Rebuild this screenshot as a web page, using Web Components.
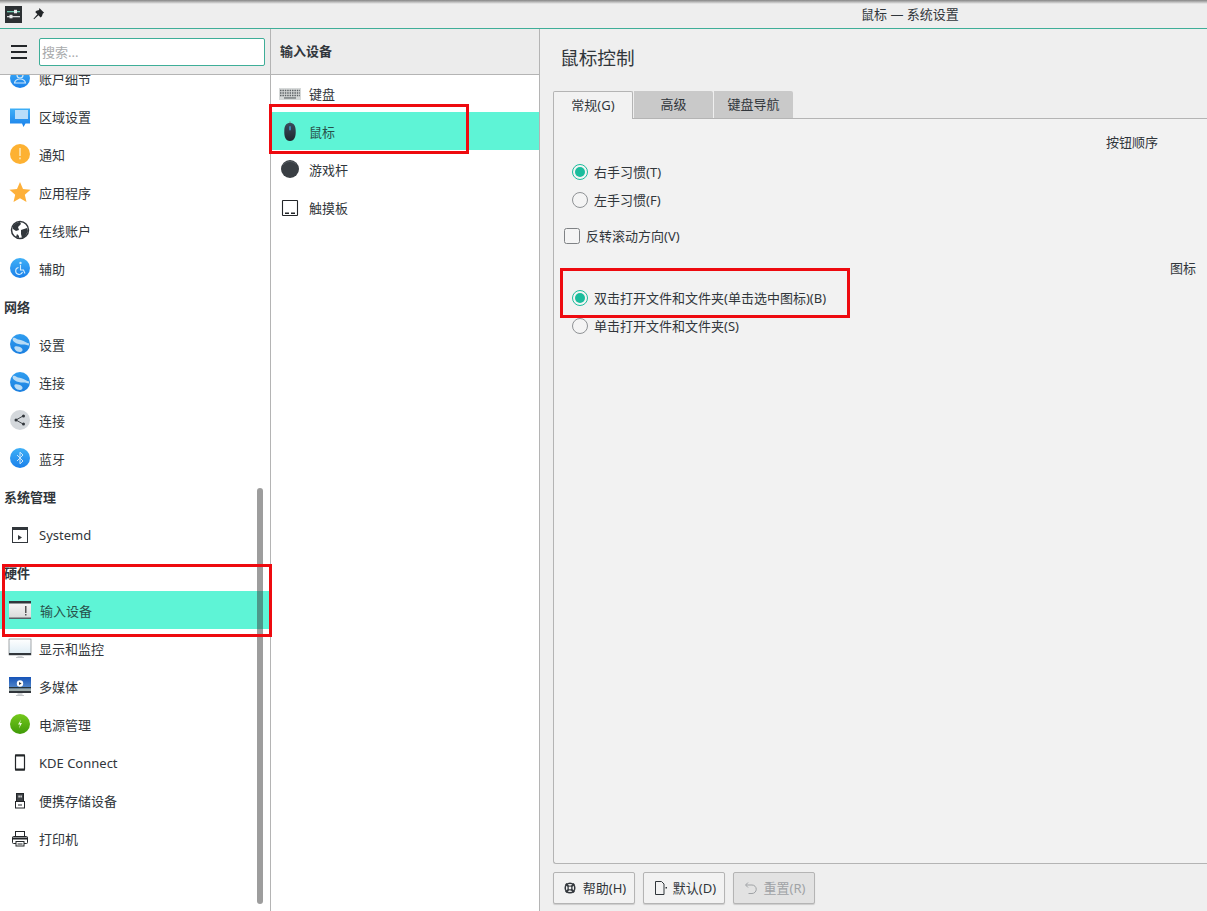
<!DOCTYPE html>
<html lang="zh"><head><meta charset="utf-8"><title>鼠标 — 系统设置</title>
<style>
html,body{margin:0;height:100%;overflow:hidden;background:#efefef}
body{font:13px/18px "Noto Sans","Noto Sans CJK SC",sans-serif;color:#31363b}
</style></head><body>
<kde-window>
  <kde-titlebar slot="top">鼠标 — 系统设置</kde-titlebar>
  <kde-sidebar slot="side">
    <kde-row icon="user">账户细节</kde-row>
    <kde-row icon="region">区域设置</kde-row>
    <kde-row icon="notify">通知</kde-row>
    <kde-row icon="star">应用程序</kde-row>
    <kde-row icon="world">在线账户</kde-row>
    <kde-row icon="access">辅助</kde-row>
    <kde-section>网络</kde-section>
    <kde-row icon="globe">设置</kde-row>
    <kde-row icon="globe">连接</kde-row>
    <kde-row icon="share">连接</kde-row>
    <kde-row icon="bt">蓝牙</kde-row>
    <kde-section>系统管理</kde-section>
    <kde-row icon="systemd">Systemd</kde-row>
    <kde-section>硬件</kde-section>
    <kde-row icon="input" selected style="--gap:8px">输入设备</kde-row>
    <kde-row icon="monitor">显示和监控</kde-row>
    <kde-row icon="media">多媒体</kde-row>
    <kde-row icon="power">电源管理</kde-row>
    <kde-row icon="phone">KDE Connect</kde-row>
    <kde-row icon="usb">便携存储设备</kde-row>
    <kde-row icon="printer">打印机</kde-row>
  </kde-sidebar>
  <kde-subnav slot="mid" heading="输入设备" style="--pad:7px">
    <kde-row icon="keyboard">键盘</kde-row>
    <kde-row icon="mouse" selected>鼠标</kde-row>
    <kde-row icon="joystick">游戏杆</kde-row>
    <kde-row icon="touchpad">触摸板</kde-row>
  </kde-subnav>
  <kde-panel slot="main" heading="鼠标控制">
    <kde-tabs>
      <kde-group heading="按钮顺序" pad="49" style="--top:14px">
        <kde-option type="radio" checked>右手习惯(T)</kde-option>
        <kde-option type="radio">左手习惯(F)</kde-option>
      </kde-group>
      <kde-option type="check" style="--indent:10px">反转滚动方向(V)</kde-option>
      <kde-group heading="图标" pad="11" style="--top:1px">
        <kde-option type="radio" checked>双击打开文件和文件夹(单击选中图标)(B)</kde-option>
        <kde-option type="radio">单击打开文件和文件夹(S)</kde-option>
      </kde-group>
    </kde-tabs>
    <kde-button slot="buttons" icon="help">帮助(H)</kde-button>
    <kde-button slot="buttons" icon="doc">默认(D)</kde-button>
    <kde-button slot="buttons" icon="undo" disabled>重置(R)</kde-button>
  </kde-panel>
  <kde-mark slot="over" style="left:2px;top:564px;width:270px;height:73px"></kde-mark>
  <kde-mark slot="over" style="left:269px;top:104px;width:200px;height:50px"></kde-mark>
  <kde-mark slot="over" style="left:560px;top:268px;width:290px;height:50px"></kde-mark>
</kde-window>
<script>
const grad=(id,a,b)=>`<defs><linearGradient id="${id}" x1="0" y1="0" x2="0" y2="1"><stop offset="0" stop-color="${a}"/><stop offset="1" stop-color="${b}"/></linearGradient></defs>`;
const blue=grad('b','#3fb0f7','#1a80ea');
const ICONS={
user:`${blue}<circle cx="12" cy="12" r="10" fill="url(#b)"/><circle cx="12" cy="9" r="3" fill="none" stroke="#cfe8fb" stroke-width="1.2"/><path d="M6.5 17c.5-3 3-4 5.500-4s5 1 5.500 4z" fill="none" stroke="#cfe8fb" stroke-width="1.200"/>`,
region:`${blue}<path d="M2 4.500h20v15H17.500L15.500 23l-1.500-3.500H2z" fill="url(#b)"/><rect x="7" y="6" width="13" height="9" fill="#b9defa"/>`,
notify:`<circle cx="12" cy="12" r="10" fill="#fdb132"/><rect x="11.200" y="6" width="1.600" height="8" fill="#fde5b4"/><rect x="11.200" y="15.500" width="1.600" height="1.800" fill="#fde5b4"/>`,
star:`<path d="M12 2l3 7 7.500.7-5.700 5 1.700 7.300L12 18.200 5.500 22l1.700-7.300-5.700-5L9 9z" fill="#fdb03a"/>`,
world:`<circle cx="12" cy="12" r="8.500" fill="#fff" stroke="#31363b" stroke-width="1.500"/><path d="M5 8c2-3 5-4 7-4l1 2-3 3 1 3-3 1-3-2zM13 12l6-2 1 3-3 6-3 1-1-4zM9 16l2 2v2l-3-1z" fill="#31363b"/>`,
access:`${blue}<circle cx="12" cy="12" r="10" fill="url(#b)"/><circle cx="12.500" cy="7" r="1.200" fill="#d5ecfc"/><path d="M12.500 9v5h3l1.500 3.500M10.500 11.500a3.500 3.500 0 1 0 4 4.500" fill="none" stroke="#d5ecfc" stroke-width="1.100"/>`,
globe:`${grad('gb','#2f9df0','#1b7fe0')}<circle cx="12" cy="12" r="10" fill="url(#gb)"/><path d="M5 6c2.500-.8 3 1 5 1.500s5 .7 7.500 2.500c2 1.500 3.500 1 3.800 1.500l-.5 2c-2-.5-3.500-1-6-1S9 12 7 10.500 4 8 5 6zM7 14.500c2-.8 5 .2 6.500 1.500s1.500 3-.3 3.700c-2 .7-4.700-.2-6-2-1-1.400-1.200-2.700-.2-3.200z" fill="#b9dcf6"/>`,
share:`<circle cx="12" cy="12" r="10" fill="#d4d8dc"/><path d="M8 12l7-4M8 12l7 4" stroke="#31363b" stroke-width=".9"/><circle cx="8" cy="12" r="1.500" fill="#31363b"/><circle cx="15.500" cy="8" r="1.500" fill="#31363b"/><circle cx="15.500" cy="16" r="1.500" fill="#31363b"/>`,
bt:`${blue}<circle cx="12" cy="12" r="10" fill="url(#b)"/><path d="M9 9l6 6-3 2.800V6.200l3 2.800-6 6" fill="none" stroke="#cfe8fb" stroke-width="1"/>`,
systemd:`<g transform="translate(0 1)"><rect x="4.500" y="4.500" width="15" height="15" fill="#fff" stroke="#31363b"/><rect x="4" y="4" width="16" height="3" fill="#31363b"/><path d="M10 12l4 2.500-4 2.500z" fill="#31363b"/></g>`,
input:`${grad('w','#fafafa','#d8d8d8')}<rect x="1" y="3" width="22" height="18" fill="url(#w)"/><rect x="1" y="3" width="22" height="2.500" fill="#31363b"/><rect x="1" y="19.500" width="22" height="1.500" fill="#5a6066"/><rect x="17" y="8" width="1.500" height="7" fill="#555"/><rect x="17" y="16" width="1.500" height="1.500" fill="#555"/>`,
monitor:`${grad('m','#ffffff','#dcecf5')}<rect x="1" y="3" width="22" height="16" fill="url(#m)" stroke="#4a4f55" stroke-width=".5"/><rect x="1" y="17" width="22" height="2" fill="#31363b"/><rect x="9.500" y="19" width="5" height="2" fill="#d4d6d8"/><rect x="8" y="21" width="8" height="1" fill="#c4c7ca"/>`,
media:`${grad('s','#1553b8','#6f9fd0')}<rect x="1" y="3" width="22" height="16" fill="url(#s)"/><rect x="1" y="13" width="22" height="1.500" fill="#25333a"/><rect x="1" y="14.500" width="22" height="2.500" fill="#9aa8a8"/><rect x="1" y="17" width="22" height="2" fill="#31363b"/><circle cx="12" cy="9.500" r="3.200" fill="#fff"/><path d="M11 8l2.600 1.500L11 11z" fill="#31363b"/><rect x="9.500" y="19" width="5" height="2" fill="#d4d6d8"/><rect x="8" y="21" width="8" height="1" fill="#c4c7ca"/>`,
power:`${grad('g','#75c91c','#3f9a08')}<circle cx="12" cy="12" r="10" fill="url(#g)"/><path d="M13 7.500l-3 5h2l-1 4 3-5.500h-2z" fill="#e8f8d8"/>`,
phone:`<g transform="translate(0 1.500)"><rect x="7.500" y="3.500" width="9" height="15" rx=".8" fill="#fff" stroke="#232629" stroke-width="1.200"/><rect x="7" y="3" width="10" height="2" fill="#232629"/><rect x="7" y="17" width="10" height="2" fill="#232629"/></g>`,
usb:`<rect x="8.500" y="5.500" width="7" height="8.500" fill="#fff" stroke="#232629"/><rect x="9" y="6" width="6" height="7.500" fill="#3d4145"/><rect x="10.500" y="7.500" width="1.200" height="2" fill="#fff"/><rect x="12.500" y="7.500" width="1.200" height="2" fill="#fff"/><rect x="7.500" y="13.500" width="9" height="6.500" fill="#fff" stroke="#232629"/><rect x="10" y="16.500" width="4" height="1" fill="#232629"/>`,
printer:`<g transform="translate(0 1)"><rect x="7.500" y="4.500" width="9" height="5.500" fill="#fff" stroke="#232629"/><rect x="4.500" y="9.500" width="15" height="7" rx="1" fill="#fff" stroke="#232629"/><rect x="4" y="10.500" width="16" height="2" fill="#232629"/><rect x="8" y="14.500" width="8" height="4.500" fill="#fff" stroke="#232629"/><rect x="9.500" y="16.500" width="5" height="1" fill="#232629"/></g>`,
keyboard:`<rect x="1" y="7" width="22" height="12" fill="#d6d9d9"/><path d="M2 9.500h20M2 12h20M2 14.500h20" stroke="#5d6265" stroke-width="1.300" stroke-dasharray="1.500 .9"/><rect x="6" y="16.300" width="12" height="1.300" fill="#6d7275"/>`,
mouse:`${grad('u','#3a4b5c','#1f272e')}<path d="M12 2.500v2" stroke="#777"/><path d="M12 4c4 0 5.500 2.500 5.700 7.500.3 6-1.200 10.500-5.700 10.500s-6-4.500-5.700-10.500C6.500 6.500 8 4 12 4z" fill="url(#u)"/><rect x="11" y="7" width="2" height="4.500" rx="1" fill="#3a85b0"/>`,
joystick:`<circle cx="12" cy="12" r="9" fill="#3a3f44"/><path d="M5 8c3-4 9-5 13-1" stroke="#555b61" fill="none"/>`,
touchpad:`<g transform="translate(0 1)"><rect x="4.500" y="4.500" width="15" height="15" rx=".5" fill="#fff" stroke="#232629" stroke-width="1.100"/><rect x="7" y="16.500" width="4" height="1.500" fill="#232629"/><rect x="13" y="16.500" width="4" height="1.500" fill="#232629"/></g>`,
pin:`<path d="M9.500 1l5.500 5.500-1.500 1-1 3-1.500 1.500-2.500-2.500-5 4.500-.7-.7 4.500-5L4.800 5.800 6.300 4.300l3-1z" fill="#232629"/>`,
app:`<rect x="0" y="0" width="17" height="17" fill="#2c3033"/><rect x="2" y="5" width="13" height="1.300" fill="#6fc7b0"/><rect x="2" y="10" width="13" height="1.300" fill="#d8dbdd"/><rect x="9" y="3.800" width="3" height="3.500" fill="#e8eaeb"/><rect x="4.500" y="8.800" width="3" height="3.500" fill="#e8eaeb"/>`,
help:`<circle cx="8" cy="8" r="4.800" fill="none" stroke="#31363b" stroke-width="1.500"/><circle cx="8" cy="8" r="2" fill="none" stroke="#31363b" stroke-width="1.200"/><path d="M3.800 3.800l2.600 2.600M12.200 3.800L9.600 6.400M3.800 12.200l2.600-2.600M12.200 12.200L9.600 9.600" stroke="#31363b" stroke-width="2"/>`,
doc:`<path d="M3.500 1.500h6l2.500 2.500v10.500h-8.500z" fill="none" stroke="#31363b"/><rect x="13.500" y="7" width="1.500" height="1.500" fill="#31363b"/>`,
undo:`<path d="M5 2.500L2.500 5 5 7.500M3 5h6a4 4 0 0 1 0 8.500H5.500" fill="none" stroke="#a0a3a6" stroke-width="1"/>`
};
const def=(n,c)=>customElements.define(n,c);
const shadow=(el,html)=>{el.attachShadow({mode:'open'}).innerHTML=html;};

def('kde-icon',class extends HTMLElement{connectedCallback(){
  const n=this.getAttribute('name'),s=this.getAttribute('size')||24,v=this.getAttribute('box')||24;
  shadow(this,`<style>:host{display:block;flex:none;width:${s}px;height:${s}px}svg{display:block}</style><svg width="${s}" height="${s}" viewBox="0 0 ${v} ${v}">${ICONS[n]}</svg>`);
}});

def('kde-window',class extends HTMLElement{constructor(){super();shadow(this,`<style>
:host{display:grid;position:relative;width:1207px;height:911px;overflow:hidden;grid-template:29px 1fr/271px 269px 1fr}
.t{grid-column:1/4;display:flex;min-width:0}.c{display:flex;min-width:0;min-height:0}
::slotted([slot=top]),::slotted([slot=side]),::slotted([slot=mid]),::slotted([slot=main]){flex:1;min-width:0}
</style><div class="t"><slot name="top"></slot></div><div class="c"><slot name="side"></slot></div><div class="c"><slot name="mid"></slot></div><div class="c"><slot name="main"></slot></div><slot name="over"></slot>`);}});

def('kde-titlebar',class extends HTMLElement{constructor(){super();shadow(this,`<style>
:host{display:block;box-sizing:border-box;background:#eeeeee;border-bottom:1px solid #3fae98;position:relative}
.bar{display:flex;align-items:center;height:28px;padding:0 0 0 5px;box-sizing:border-box}
.shade{position:absolute;left:0;right:0;top:0;height:4px;background:linear-gradient(#858585,#eeeeee)}
.pin{margin-left:9px}
.title{margin-left:816px;font-size:13px;white-space:nowrap;padding-bottom:1px}
</style><div class="shade"></div><div class="bar"><kde-icon name="app" size="17" box="17"></kde-icon><kde-icon class="pin" name="pin" size="14" box="16"></kde-icon><span class="title"><slot></slot></span></div>`);}});

def('kde-sidebar',class extends HTMLElement{constructor(){super();shadow(this,`<style>
:host{display:flex;flex-direction:column;background:#fff;border-right:1px solid #b4b4b4;box-sizing:border-box;position:relative;overflow:hidden}
.head{flex:none;height:45px;box-sizing:border-box;background:#ececec;box-shadow:0 1px 0 #b4b4b4;display:flex;align-items:center;padding:0 5px 0 8px;gap:9px;position:relative;z-index:1}
.menu{width:22px;flex:none;display:grid;gap:4px;justify-items:center}
.menu i{display:block;width:16px;height:2px;background:#232629}
.search{flex:1;height:28px;box-sizing:border-box;background:#fff;border:1px solid #3fae98;border-radius:2px;padding:0 2px;color:#a8aaac;line-height:26px;font-size:13px}
.list{margin-top:-15px}
.thumb{position:absolute;right:7px;top:459px;width:6px;height:416px;border-radius:3px;background:rgba(60,60,60,.5);z-index:2}
</style><div class="head"><div class="menu"><i></i><i></i><i></i></div><div class="search">搜索...</div></div><div class="list"><slot></slot></div><div class="thumb"></div>`);}});

def('kde-section',class extends HTMLElement{constructor(){super();shadow(this,`<style>
:host{display:flex;align-items:center;box-sizing:border-box;height:38px;padding:1px 0 0 4px;font-weight:700;font-size:13px}
</style><slot></slot>`);}});

def('kde-row',class extends HTMLElement{connectedCallback(){
  const sel=this.hasAttribute('selected');
  shadow(this,`<style>
:host{display:flex;align-items:center;height:38px;padding-left:var(--pad,8px);gap:var(--gap,7px);box-sizing:border-box;font-size:13px;${sel?'background:#5ef4d6;color:#28504a':''}}
span{white-space:nowrap;padding-top:1px}
</style><kde-icon name="${this.getAttribute('icon')}"></kde-icon><span><slot></slot></span>`);
}});

def('kde-subnav',class extends HTMLElement{connectedCallback(){
  shadow(this,`<style>
:host{display:flex;flex-direction:column;background:#fff;border-right:1px solid #b4b4b4;box-sizing:border-box}
.head{flex:none;height:45px;box-sizing:border-box;padding-bottom:1px;background:#ececec;box-shadow:0 1px 0 #b4b4b4;display:flex;align-items:center;padding-left:9px;font-weight:700;position:relative;z-index:1}
</style><div class="head">${this.getAttribute('heading')}</div><slot></slot>`);
}});

def('kde-panel',class extends HTMLElement{connectedCallback(){
  shadow(this,`<style>
:host{display:flex;flex-direction:column;background:#efefef;box-sizing:border-box;padding:0 0 7px 13px;min-width:0}
h1{margin:0;font-size:18.67px;font-weight:400;line-height:24px;padding:17px 0 21px 7px;flex:none}
.body{flex:1;display:flex;min-height:0}
::slotted(kde-tabs){flex:1;min-width:0}
.btns{flex:none;display:flex;gap:8px;margin-top:8px}
</style><h1>${this.getAttribute('heading')}</h1><div class="body"><slot></slot></div><div class="btns"><slot name="buttons"></slot></div>`);
}});

def('kde-tabs',class extends HTMLElement{constructor(){super();shadow(this,`<style>
:host{display:flex;flex-direction:column;min-height:0}
.tabs{display:flex;flex:none;height:28px;position:relative;z-index:1}
.tab{box-sizing:border-box;display:flex;align-items:center;justify-content:center;height:27px;padding-bottom:1px;background:#c9c9c9;border-top-right-radius:2px;font-size:13px;margin-right:1px;width:79px}
.tab.on{width:80px;height:28px;padding-bottom:2px;background:#f2f2f2;border:1px solid #b4b4b4;border-bottom:0;border-radius:2px 2px 0 0}
.frame{flex:1;margin-top:-1px;background:#f2f2f2;border:1px solid #b4b4b4;border-right:0;border-radius:0 0 0 3px;display:flex;flex-direction:column;padding-top:0;min-height:0}
</style><div class="tabs"><div class="tab on">常规(G)</div><div class="tab">高级</div><div class="tab">键盘导航</div></div><div class="frame"><slot></slot></div>`);}});

def('kde-group',class extends HTMLElement{connectedCallback(){
  shadow(this,`<style>
:host{display:block;padding-top:var(--top,0)}
.h{height:18px;line-height:18px;font-size:13px;text-align:right;padding-right:${this.getAttribute('pad')}px;margin-bottom:7px}
</style><div class="h">${this.getAttribute('heading')}</div><slot></slot>`);
}});

def('kde-option',class extends HTMLElement{connectedCallback(){
  const r=this.getAttribute('type')==='radio',c=this.hasAttribute('checked');
  const m=r?`<svg width="16" height="16" viewBox="0 0 16 16"><circle cx="8" cy="8" r="7.500" fill="#f4f4f4" stroke="${c?'#1abc9c':'#8f9295'}"/>${c?'<circle cx="8" cy="8" r="5" fill="#1abc9c"/>':''}</svg>`
    :`<svg width="16" height="16" viewBox="0 0 16 16"><rect x=".5" y=".5" width="15" height="15" rx="2" fill="#f4f4f4" stroke="#7f8285"/></svg>`;
  shadow(this,`<style>
:host{display:flex;align-items:center;height:28px;gap:6px;padding-left:var(--indent,18px);font-size:13px}
:host([type=check]){height:44px}
svg{display:block;flex:none}span{white-space:nowrap}
</style>${m}<span><slot></slot></span>`);
}});

def('kde-button',class extends HTMLElement{connectedCallback(){
  const d=this.hasAttribute('disabled');
  shadow(this,`<style>
:host{display:flex;align-items:center;justify-content:center;gap:5px;box-sizing:border-box;width:82px;height:32px;font-size:13px;border:1px solid #b4b4b4;border-radius:2px;background:${d?'#e2e2e2':'#f2f2f2'};box-shadow:0 1px 1px rgba(0,0,0,.15);${d?'color:#a0a3a6':''}}
span{white-space:nowrap}
</style><kde-icon name="${this.getAttribute('icon')}" size="16" box="16"></kde-icon><span><slot></slot></span>`);
}});

def('kde-mark',class extends HTMLElement{constructor(){super();shadow(this,`<style>
:host{position:absolute;box-sizing:border-box;border:3px solid #ee0a0f;pointer-events:none;z-index:5}
</style>`);}});
</script>
</body></html>
